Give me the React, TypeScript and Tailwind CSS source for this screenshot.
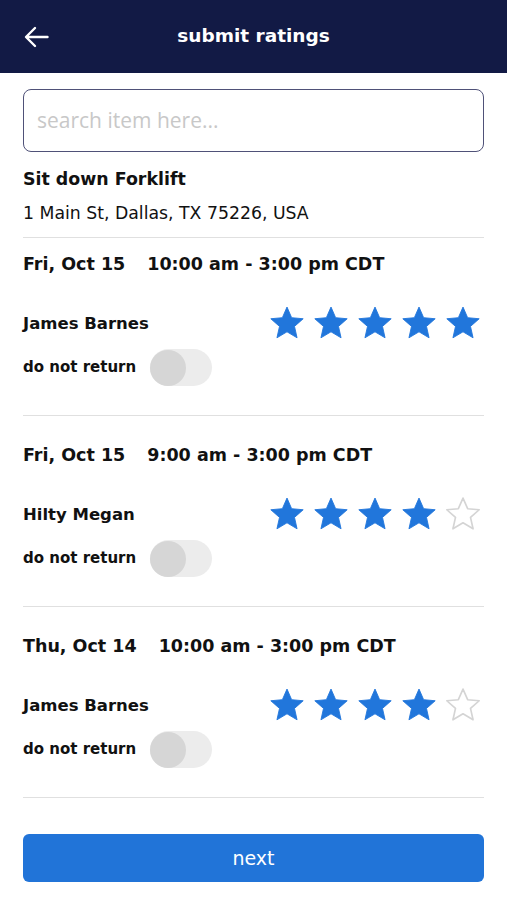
import React from "react";

const FONT = { fontFamily: '"DejaVu Sans", Verdana, sans-serif' };

function Star({ filled }: { filled: boolean }) {
  return (
    <svg width="36" height="35" viewBox="0 0 24 23">
      <path
        d="M12 1.2l3.1 7.1 7.7.7-5.8 5.1 1.7 7.6L12 17.7l-6.7 4 1.7-7.6L1.2 9l7.7-.7z"
        fill={filled ? "#2176db" : "none"}
        stroke={filled ? "#2176db" : "#d4d4d4"}
        strokeWidth={filled ? 0.6 : 1.1}
        strokeLinejoin="round"
      />
    </svg>
  );
}

function Toggle() {
  return (
    <div className="w-[62px] h-[37px] rounded-full bg-[#ececec] flex items-center">
      <div className="w-[36px] h-[36px] rounded-full bg-[#d6d6d6]" />
    </div>
  );
}

function Section({
  date,
  time,
  name,
  rating,
  first,
}: {
  date: string;
  time: string;
  name: string;
  rating: number;
  first?: boolean;
}) {
  return (
    <div
      className={`border-b border-[#e0e0e0] ${first ? "pt-[14px] h-[178px]" : "pt-[27px] h-[191px]"}`}
    >
      <div className="flex items-center h-[24px] text-[17.5px] font-bold text-[#111]">
        <span>{date}</span>
        <span className="ml-[22px]">{time}</span>
      </div>
      <div className="flex items-center justify-between mt-[36px] h-[24px]">
        <span className="text-[16.5px] font-bold text-[#111]">{name}</span>
        <div className="flex items-center gap-[8px] mr-[3px] mb-[4px]">
          {[0, 1, 2, 3, 4].map((i) => (
            <Star key={i} filled={i < rating} />
          ))}
        </div>
      </div>
      <div className="flex items-center mt-[13px] h-[37px]">
        <span className="text-[15px] font-bold text-[#111] w-[127px]">do not return</span>
        <Toggle />
      </div>
    </div>
  );
}

export default function App() {
  return (
    <div className="w-[507px] h-[900px] bg-white flex flex-col" style={FONT}>
      <div className="h-[73px] bg-[#121a45] flex items-center relative">
        <svg className="ml-[24px]" width="25" height="22" viewBox="0 0 25 22" fill="none">
          <path d="M23.5 11H2.5M11 2L2 11l9 9" stroke="white" strokeWidth="2.4" strokeLinecap="round" strokeLinejoin="round" />
        </svg>
        <div className="absolute inset-x-0 top-0 h-[72px] flex items-center justify-center">
          <span className="text-white font-bold text-[18.5px]">submit ratings</span>
        </div>
      </div>
      <div className="px-[23px] flex flex-col">
        <div className="mt-[16px] h-[63px] rounded-[8px] border-[1.5px] border-[#4f5178] flex items-center px-[13px]">
          <span
            className="text-[21px] text-[#c8c8c8]"
            style={{ fontFamily: '"Open Sans", Roboto, sans-serif' }}
          >
            search item here...
          </span>
        </div>
        <div className="mt-[15px] h-[24px] flex items-center text-[17.4px] font-bold text-[#111]">
          Sit down Forklift
        </div>
        <div className="border-b border-[#e0e0e0] pb-[11px]">
          <div className="mt-[11px] h-[24px] flex items-center text-[17.3px] text-[#111]">
            1 Main St, Dallas, TX 75226, USA
          </div>
        </div>
        <Section first date="Fri, Oct 15" time="10:00 am - 3:00 pm CDT" name="James Barnes" rating={5} />
        <Section date="Fri, Oct 15" time="9:00 am - 3:00 pm CDT" name="Hilty Megan" rating={4} />
        <Section date="Thu, Oct 14" time="10:00 am - 3:00 pm CDT" name="James Barnes" rating={4} />
        <button className="mt-[36px] h-[48px] rounded-[6px] bg-[#2174d8] text-white text-[19px] flex items-center justify-center">
          next
        </button>
      </div>
    </div>
  );
}
